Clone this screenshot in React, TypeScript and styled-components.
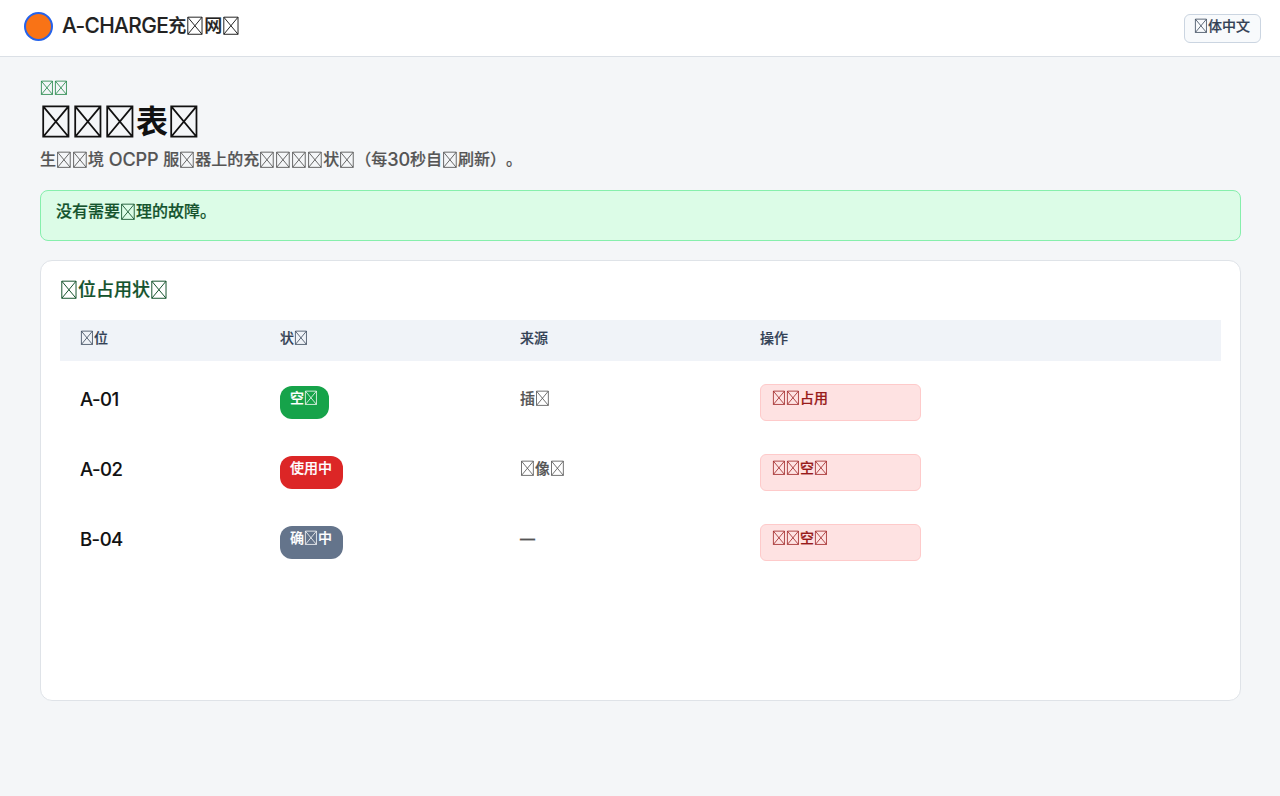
import React from "react";
import styled, { createGlobalStyle } from "styled-components";

const GlobalStyle = createGlobalStyle`
  * { box-sizing: border-box; }
  body {
    margin: 0;
    background: #f4f6f8;
    font-family: "Noto Sans CJK SC", sans-serif;
    color: #111;
  }
  h1, h2, p { margin: 0; font-weight: inherit; }
`;

const Line = styled.span<{ $size: number; $weight?: number; $color?: string }>`
  display: block;
  height: 1em;
  white-space: pre;
  line-height: 1;
  text-spacing-trim: space-all;
  -webkit-text-stroke: ${(p) => (p.$weight === 700 ? 0 : 0.2)}px currentColor;
  font-size: ${(p) => p.$size}px;
  font-weight: ${(p) => p.$weight ?? 500};
  color: ${(p) => p.$color ?? "inherit"};
`;

const Latin = styled.span<{ $scale: number; $spacing: number }>`
  font-family: Inter, sans-serif;
  font-weight: 500;
  font-size: ${(p) => p.$scale}em;
  letter-spacing: ${(p) => p.$spacing}em;
  line-height: 0;
  vertical-align: -0.04em;
  -webkit-text-stroke-width: 0.1px;
`;

const Dash = styled.span`
  font-family: "Liberation Sans", sans-serif;
  font-weight: 700;
  line-height: 0;
`;

const Box = styled.svg`
  display: inline-block;
  width: 1em;
  height: 1em;
  margin: -0.1em 0;
  vertical-align: -0.06em;
  overflow: visible;
  fill: none;
  stroke: currentColor;
  stroke-width: 5.5;
`;

const Tofu = () => (
  <Box viewBox="0 0 100 100" aria-hidden="true">
    <path d="M10 1H89V96H10ZM10 1L89 96M89 1L10 96" />
  </Box>
);

type LabelProps = {
  text: string;
  size: number;
  weight?: number;
  color?: string;
  scale?: number;
  spacing?: number;
};

/* "□" marks a character the font has no glyph for. */
const Label = ({ text, size, weight, color, scale = 1.16, spacing = -0.03 }: LabelProps) => (
  <Line $size={size} $weight={weight} $color={color}>
    {text.split(/(□|—|[ A-Z0-9-]+)/).filter(Boolean).map((part, i) => {
      if (part === "□") return <Tofu key={i} />;
      if (part === "—") return <Dash key={i}>{part}</Dash>;
      if (/^[ A-Z0-9-]+$/.test(part)) {
        return <Latin key={i} $scale={scale} $spacing={spacing}>{part}</Latin>;
      }
      return part;
    })}
  </Line>
);

const Header = styled.header`
  display: flex;
  align-items: flex-start;
  height: 57px;
  padding: 12px 19px 0 24px;
  background: #fff;
  border-bottom: 1px solid #dbe0e6;
`;

const Logo = styled.div`
  width: 29px;
  height: 29px;
  border: 2px solid #2563eb;
  border-radius: 50%;
  background: #f97316;
`;

const Brand = styled.div`
  flex: 1;
  padding: 3px 0 0 9px;
`;

const LanguageButton = styled.button`
  display: flex;
  align-items: flex-start;
  width: 77px;
  height: 29px;
  margin-top: 2px;
  padding: 3px 0 0 9px;
  font-family: inherit;
  color: #334155;
  background: #f8fafc;
  border: 1px solid #cbd5e1;
  border-radius: 6px;
`;

const Main = styled.main`
  width: 1241px;
  padding: 23px 0 0 40px;
`;

const Title = styled.h1`
  padding-top: 9px;
`;

const Subtitle = styled.p`
  padding-top: 15px;
`;

const Notice = styled.div`
  height: 51px;
  margin-top: 24px;
  padding: 11px 15px;
  background: #dcfce7;
  border: 1px solid #86efac;
  border-radius: 8px;
`;

const Card = styled.section`
  height: 441px;
  margin-top: 19px;
  padding: 18px 19px;
  background: #fff;
  border: 1px solid #dfe3e8;
  border-radius: 12px;
`;

const Columns = styled.div`
  display: grid;
  grid-template-columns: 200px 240px 240px 1fr;
  align-items: start;
  padding: 0 20px;
`;

const HeadRow = styled(Columns)`
  height: 41px;
  margin-top: 23px;
  padding-top: 10px;
  background: #f0f3f8;
`;

const Row = styled(Columns)`
  height: 70px;
  padding-top: 23px;
`;

const Cell = styled.div`
  padding-top: 6px;
`;

const Pill = styled.div<{ $bg: string }>`
  width: fit-content;
  height: 33px;
  margin-top: 2px;
  padding: 4px 11px 0 10px;
  border-radius: 12px;
  color: #fff;
  background: ${(p) => p.$bg};
`;

const ActionButton = styled.button`
  display: flex;
  align-items: flex-start;
  width: 161px;
  height: 37px;
  padding: 5px 11px;
  font-family: inherit;
  color: #991b1b;
  background: #fee2e2;
  border: 1px solid #fecaca;
  border-radius: 6px;
`;

const rows = [
  { id: "A-01", status: "空□", bg: "#16a34a", source: "插□", action: "□□占用" },
  { id: "A-02", status: "使用中", bg: "#dc2626", source: "□像□", action: "□□空□" },
  { id: "B-04", status: "确□中", bg: "#64748b", source: "—", action: "□□空□" },
];

export default function App() {
  return (
    <>
      <GlobalStyle />
      <Header>
        <Logo />
        <Brand><Label text="A-CHARGE充□网□" size={18} color="#222" /></Brand>
        <LanguageButton><Label text="□体中文" size={14} /></LanguageButton>
      </Header>
      <Main>
        <Label text="□□" size={14} color="#15803d" />
        <Title><Label text="□□□表□" size={32} weight={700} /></Title>
        <Subtitle>
          <Label
            text="生□□境 OCPP 服□器上的充□□□□状□（每30秒自□刷新）。"
            size={16}
            color="#555"
            scale={1.13}
            spacing={-0.008}
          />
        </Subtitle>
        <Notice><Label text="没有需要□理的故障。" size={16} color="#14532d" /></Notice>
        <Card>
          <h2><Label text="□位占用状□" size={18} color="#14532d" /></h2>
          <HeadRow>
            {["□位", "状□", "来源", "操作"].map((t) => (
              <Label key={t} text={t} size={14} color="#334155" />
            ))}
          </HeadRow>
          {rows.map((r) => (
            <Row key={r.id}>
              <Cell><Label text={r.id} size={16} /></Cell>
              <Pill $bg={r.bg}><Label text={r.status} size={14} /></Pill>
              <Cell><Label text={r.source} size={15} color="#555" /></Cell>
              <ActionButton><Label text={r.action} size={14} /></ActionButton>
            </Row>
          ))}
        </Card>
      </Main>
    </>
  );
}
